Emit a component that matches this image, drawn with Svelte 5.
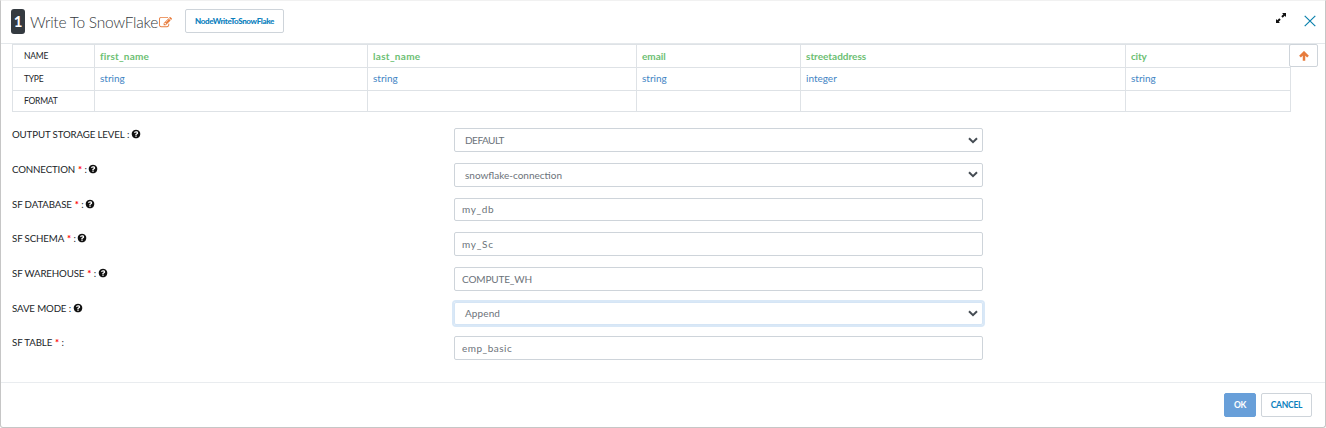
<script>
  const columns = [
    { name: 'first_name', type: 'string', spacing: 0.2 },
    { name: 'last_name', type: 'string', spacing: 0.3 },
    { name: 'email', type: 'string', spacing: 0 },
    { name: 'streetaddress', type: 'integer', spacing: 0 },
    { name: 'city', type: 'string', spacing: -0.2 }
  ];
  const fields = [
    { label: 'OUTPUT STORAGE LEVEL', help: true, select: true, value: 'DEFAULT', spacing: -0.5 },
    { label: 'CONNECTION', required: true, help: true, select: true, value: 'snowflake-connection', spacing: 0 },
    { label: 'SF DATABASE', required: true, help: true, value: 'my_db', spacing: 0.65 },
    { label: 'SF SCHEMA', required: true, help: true, value: 'my_Sc', spacing: 0.75 },
    { label: 'SF WAREHOUSE', required: true, help: true, value: 'COMPUTE_WH', spacing: -0.15 },
    { label: 'SAVE MODE', help: true, select: true, focus: true, value: 'Append', spacing: 0.1 },
    { label: 'SF TABLE', required: true, value: 'emp_basic', spacing: 0.5 }
  ];
</script>

<div class="dialog">
  <header>
    <span class="badge">1</span>
    <h1>Write To SnowFlake</h1>
    <svg class="edit" viewBox="0 0 1792 1792"><path d="M888 1184l116-116-152-152-116 116v56h96v96h56zm440-720q-16-16-33 1l-350 350q-17 17-1 33t33-1l350-350q17-17 1-33zm80 594v190q0 119-84.500 203.500t-203.500 84.500h-832q-119 0-203.500-84.500t-84.500-203.500v-832q0-119 84.500-203.500t203.500-84.500h832q63 0 117 25 15 7 18 23 3 17-9 29l-49 49q-14 14-32 8-23-6-45-6h-832q-66 0-113 47t-47 113v832q0 66 47 113t113 47h832q66 0 113-47t47-113v-126q0-13 9-22l64-64q15-15 35-7t20 29zm-96-738l288 288-672 672h-288v-288zm444 132l-92 92-288-288 92-92q28-28 68-28t68 28l152 152q28 28 28 68t-28 68z" /></svg>
    <button class="node">NodeWriteToSnowFlake</button>
    <svg class="expand" viewBox="0 0 10 10"><path d="M6 0H10V4L8.700 2.700L6.700 4.700L5.300 3.300L7.300 1.300ZM4 10H0V6L1.300 7.300L3.300 5.300L4.700 6.700L2.700 8.700Z" /></svg>
    <svg class="close" viewBox="0 0 12 12"><path d="M.7 .9L11.300 11.100M11.300 .9L.7 11.100" /></svg>
  </header>

  <div class="schema">
    <table>
      <colgroup>
        <col style="width:82px" /><col style="width:273px" /><col style="width:269px" /><col style="width:164px" /><col style="width:325px" /><col style="width:165px" />
      </colgroup>
      <tbody>
        <tr class="names"><th>NAME</th>{#each columns as c}<td style="letter-spacing:{c.spacing}px">{c.name}</td>{/each}</tr>
        <tr class="types"><th>TYPE</th>{#each columns as c}<td>{c.type}</td>{/each}</tr>
        <tr class="formats"><th>FORMAT</th>{#each columns as c}<td></td>{/each}</tr>
      </tbody>
    </table>
    <button class="up" aria-label="Collapse"><svg viewBox="0 0 10 10"><path d="M5 9.800V1.800M1 5.700L5 1.700L9 5.700" /></svg></button>
  </div>

  <form>
    {#each fields as f}
      <div class="row">
        <div class="label">
          <span>{f.label}</span>{#if f.required}<b>*</b>{/if}<i>:</i>
          {#if f.help}
            <svg viewBox="0 0 1792 1792"><path d="M1024 1376v-192q0-14-9-23t-23-9h-192q-14 0-23 9t-9 23v192q0 14 9 23t23 9h192q14 0 23-9t9-23zm256-672q0-88-55.500-163t-138.500-116-170-41q-243 0-371 213-15 24 8 42l132 100q7 6 19 6 16 0 25-12 53-68 86-92 34-24 86-24 48 0 85.500 26t37.500 59q0 38-20 61t-68 45q-63 28-115.500 86.500t-52.500 125.500v36q0 14 9 23t23 9h192q14 0 23-9t9-23q0-19 21.500-49.500t54.500-49.500q32-18 49-28.500t46-35 44.500-48 28-60.500 12.500-81zm384 192q0 209-103 385.500t-279.500 279.500-385.500 103-385.500-103-279.500-279.500-103-385.500 103-385.500 279.500-279.500 385.500-103 385.500 103 279.500 279.500 103 385.500z" /></svg>
          {/if}
        </div>
        <div class="control" class:select={f.select} class:focus={f.focus}>
          <span style="letter-spacing:{f.spacing}px">{f.value}</span>
          {#if f.select}<svg viewBox="0 0 10 7"><path d="M1 1.200L5 5.100L9 1.200" /></svg>{/if}
        </div>
      </div>
    {/each}
  </form>

  <footer>
    <button class="ok">OK</button>
    <button class="cancel">CANCEL</button>
  </footer>
</div>

<style>
  :global(body) { background: #fff; }
  .dialog {
    box-sizing: border-box; width: 1326px; height: 428px; display: flex; flex-direction: column;
    border: 1px solid #c6c6c6; border-top-color: #f1f1f1; border-radius: 0 0 3px 3px;
    font-family: Lato, sans-serif; color: #212529; background: #fff;
  }
  button { box-sizing: border-box; padding: 0; background: #fff; border: 1px solid #ced4da; border-radius: 2px; font-family: inherit; }
  header { box-sizing: border-box; height: 43px; flex: none; display: flex; align-items: center; padding: 0 9px 2px 10px; border-bottom: 1px solid #e4e8eb; }
  .badge { width: 14px; height: 25px; border-radius: 3px; background: #343a40; color: #fff; font: 700 15px/25px Lato, sans-serif; text-align: center; }
  h1 { margin: 2px 0 0 5px; width: 129px; font-size: 15.500px; font-weight: 300; line-height: 20px; letter-spacing: -0.250px; white-space: nowrap; color: #343a40; }
  .edit { width: 13px; height: 13px; fill: #e87d3e; margin-top: 3px; }
  .node { width: 99px; height: 24px; margin-left: 13px; color: #0a80bd; font-size: 8px; font-weight: 900; letter-spacing: -0.350px; }
  .expand { width: 10px; height: 10px; margin-left: auto; margin-top: -6px; fill: #111; }
  .close { width: 12px; height: 12px; margin-left: 18px; fill: none; stroke: #0a80ad; stroke-width: 1.200; }
  .schema { display: flex; align-items: flex-start; padding-left: 11px; height: 68px; flex: none; }
  table { width: 1279px; table-layout: fixed; border-collapse: collapse; }
  th, td { box-sizing: border-box; border: 1px solid #dee2e6; padding: 0 5px 1px; text-align: left; white-space: nowrap; line-height: 16px; }
  th { padding: 0 0 0 11px; font-size: 8.500px; font-weight: 400; letter-spacing: -0.250px; }
  .names, .types { height: 23px; }
  .formats { height: 21px; }
  .names td { color: #6cc073; font-size: 10px; font-weight: 700; }
  .types td { color: #4385c4; font-size: 10px; padding-bottom: 2px; }
  .up { width: 29px; height: 23px; margin-left: -2px; display: flex; align-items: center; justify-content: center; z-index: 1; }
  .up svg { width: 10px; height: 10px; fill: none; stroke: #e77c3d; stroke-width: 2.500; }
  form { padding: 16.300px 0 0 11px; flex: 1; }
  .row { display: flex; height: 34.650px; }
  .label { width: 442px; height: 14px; margin-top: -1px; display: flex; align-items: center; font-size: 9.700px; line-height: 14px; letter-spacing: -0.130px; white-space: nowrap; }
  .label b { color: #f00; margin-left: 3px; font-weight: 700; }
  .label i { font-style: normal; margin-left: 2.500px; }
  .label svg { width: 10px; height: 10px; margin-left: 1.500px; fill: #111; }
  .control {
    box-sizing: border-box; width: 529px; height: 23.650px; display: flex; align-items: center; justify-content: space-between;
    border: 1px solid #ced4da; border-radius: 2px; padding: 0 4px 0 7px; font-size: 10px; color: #6c737a;
  }
  .select { padding-left: 10px; }
  .select svg { width: 10px; height: 7px; fill: none; stroke: #454c53; stroke-width: 2; }
  .focus { border-color: #d5e5f5; box-shadow: 0 0 0 2px #d9e8f7; }
  footer { box-sizing: border-box; height: 45px; flex: none; display: flex; justify-content: flex-end; gap: 5px; padding: 10px 13px 0 0; border-top: 1px solid #e9ecef; }
  footer button { height: 24px; font-size: 8.500px; font-weight: 700; letter-spacing: -0.250px; }
  .ok { width: 32px; color: #fff; background: #689fd9; border-color: #689fd9; }
  .cancel { width: 51px; color: #0a80bd; }
</style>
